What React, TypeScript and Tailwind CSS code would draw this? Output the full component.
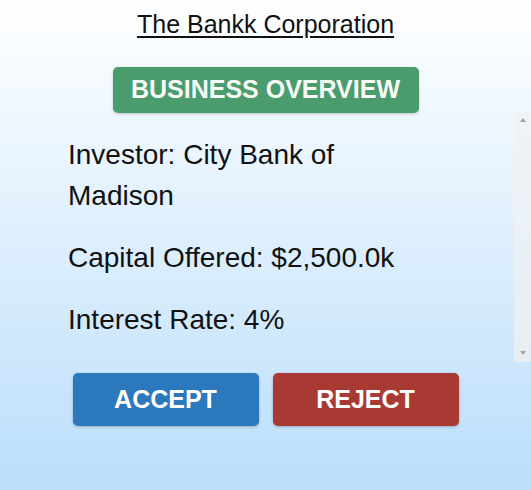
const font = { fontFamily: '"Liberation Sans", Arial, sans-serif' };

const InfoLine = ({ text }: { text: string }) => (
    <p className="text-[28px] leading-[41px] text-[#111]">{text}</p>
);

type ActionProps = {
    label: string
    color: string
};

const ActionButton = ({ label, color }: ActionProps) => (
    <button
        className={`w-[186px] h-[53px] rounded-[5px] text-white font-bold text-[25px] shadow-[0_1px_3px_rgba(0,0,0,0.25)] ${color}`}
    >
        {label}
    </button>
);

// the browser hides real scrollbars, so the empty classic track is drawn over the panel
const ScrollTrack = () => (
    <div className="absolute right-0 top-0 w-[17px] h-full bg-[rgba(241,241,241,0.7)] flex flex-col items-center justify-between pt-[5px] pb-[7px]">
        <span className="w-0 h-0 border-x-[3.5px] border-x-transparent border-b-[4px] border-b-[#a3a3a3]" />
        <span className="w-0 h-0 border-x-[3.5px] border-x-transparent border-t-[4px] border-t-[#a3a3a3]" />
    </div>
);

const App = () => {
    return (
        <div
            className="w-full min-h-screen h-[490px] flex flex-col items-center bg-gradient-to-b from-[#ffffff] to-[#bbdefb] overflow-hidden"
            style={font}
        >
            <h1 className="pt-[10px] text-[25px] leading-[29px] text-[#111] underline underline-offset-[3px] decoration-[1.5px]">
                The Bankk Corporation
            </h1>
            <div className="mt-[28px] h-[46px] w-[306px] rounded-[5px] bg-[#4b9c6d] flex items-center justify-center text-[25px] font-bold text-[#f7fbf8] shadow-[0_1px_3px_rgba(0,0,0,0.2)]">
                BUSINESS OVERVIEW
            </div>
            <div className="relative w-full h-[249px]">
                <div className="h-full overflow-y-auto">
                    <div className="pl-[68px] pt-[21px] w-[420px] flex flex-col gap-[21px]">
                        <InfoLine text="Investor: City Bank of Madison" />
                        <InfoLine text="Capital Offered: $2,500.0k" />
                        <InfoLine text="Interest Rate: 4%" />
                    </div>
                </div>
                <ScrollTrack />
            </div>
            <div className="mt-[11px] flex gap-[14px]">
                <ActionButton label="ACCEPT" color="bg-[#2b78bd]" />
                <ActionButton label="REJECT" color="bg-[#a93a33]" />
            </div>
        </div>
    );
};

export default App;
